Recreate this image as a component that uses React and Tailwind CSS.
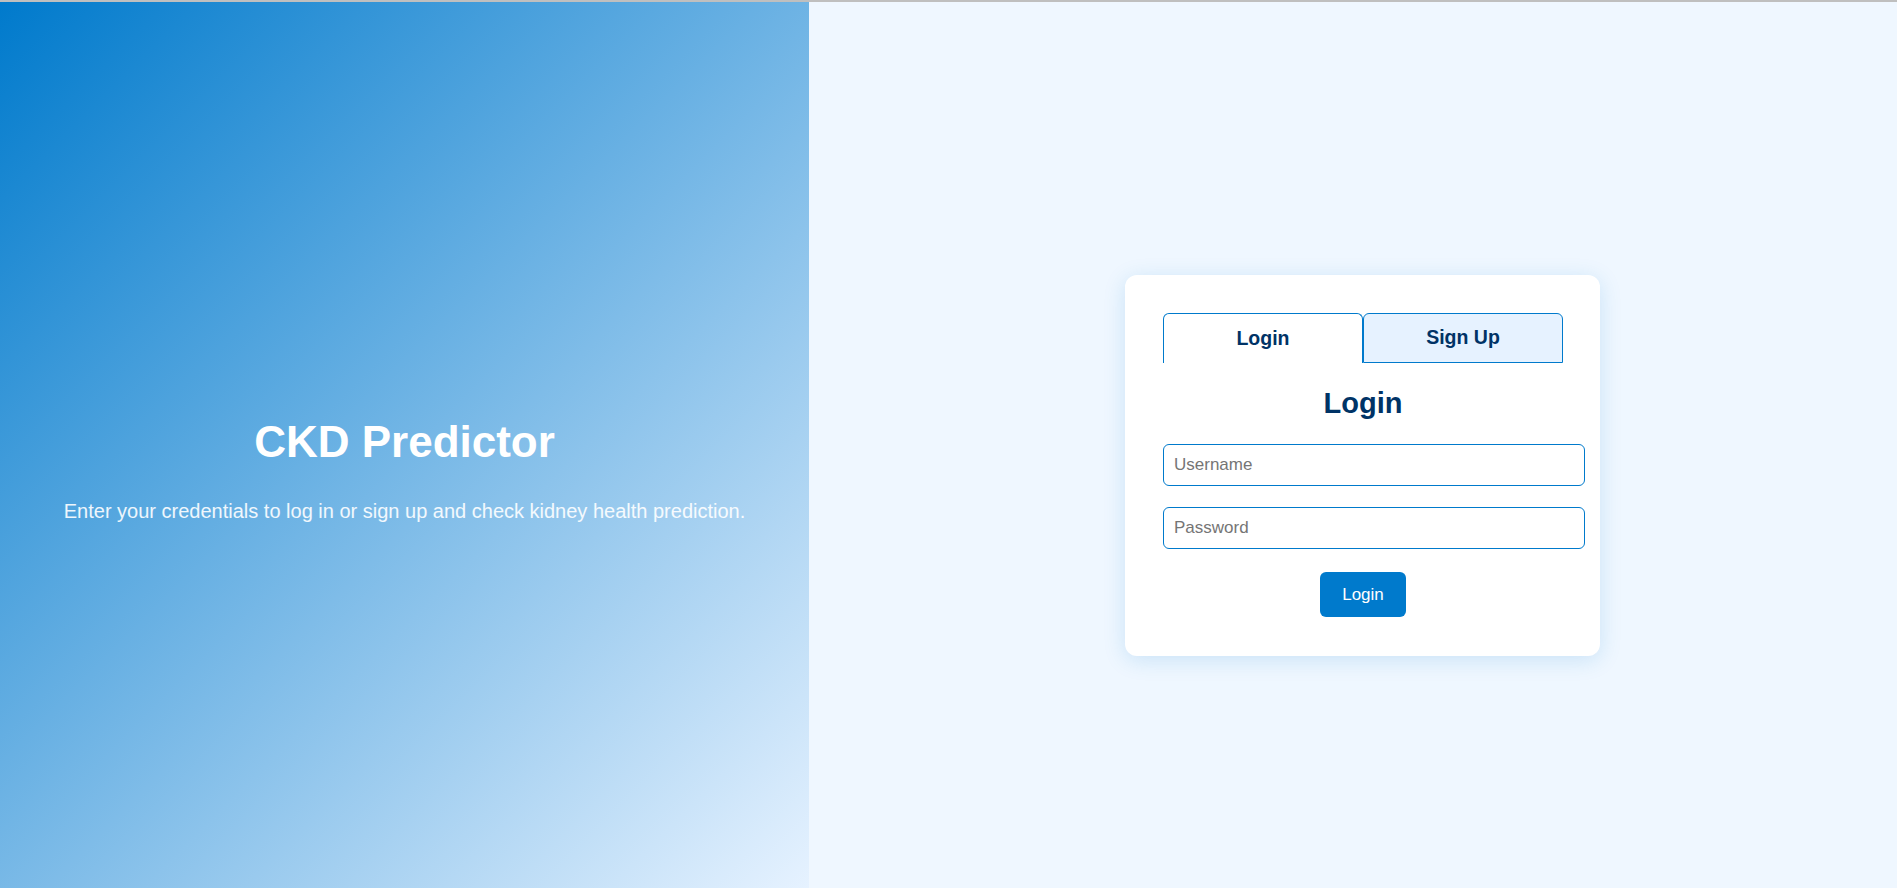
import React from "react";

export default function App() {
  return (
    <div
      className="w-[1897px] h-[888px] flex flex-col overflow-hidden"
      style={{ fontFamily: '"Liberation Sans", Arial, sans-serif' }}
    >
      <div className="h-[2px] bg-[#bfbfbf] shrink-0" />
      <div className="flex flex-1">
        <div className="w-[809px] shrink-0 bg-[linear-gradient(135deg,#007acc,#e6f2ff)] flex flex-col items-center justify-center pt-[50px]">
          <h1 className="text-white font-bold text-[44px] leading-[50px] m-0">
            CKD Predictor
          </h1>
          <p className="text-white/90 text-[20px] leading-[23px] mt-[33px]">
            Enter your credentials to log in or sign up and check kidney health prediction.
          </p>
        </div>
        <div className="flex-1 bg-[#eff7ff] pt-[273px] pl-[316px]">
          <div className="w-[475px] bg-white rounded-[12px] shadow-[0_4px_22px_rgba(0,122,204,0.16)] px-[38px] pt-[38px] pb-[39px]">
            <div className="flex w-[400px]">
              <button className="flex-1 h-[50px] bg-white border border-[#007acc] border-b-0 rounded-t-[6px] text-[#003366] font-bold text-[19.5px]">
                Login
              </button>
              <button className="flex-1 h-[50px] bg-[#e6f2ff] border border-[#007acc] rounded-t-[6px] text-[#003366] font-bold text-[19.5px]">
                Sign Up
              </button>
            </div>
            <h2 className="w-[400px] text-center text-[#003366] font-bold text-[29px] leading-[33px] mt-[24px] mb-[24px]">
              Login
            </h2>
            <input
              type="text"
              placeholder="Username"
              className="block w-[422px] h-[42px] border border-[#007acc] rounded-[6px] px-[10px] text-[17px] placeholder:text-[#757575] outline-none"
            />
            <input
              type="password"
              placeholder="Password"
              className="block w-[422px] h-[42px] mt-[21px] border border-[#007acc] rounded-[6px] px-[10px] text-[17px] placeholder:text-[#757575] outline-none"
            />
            <div className="w-[400px] flex justify-center mt-[23px]">
              <button className="h-[45px] px-[22px] bg-[#007acc] text-white text-[17px] rounded-[6px]">
                Login
              </button>
            </div>
          </div>
        </div>
      </div>
    </div>
  );
}
